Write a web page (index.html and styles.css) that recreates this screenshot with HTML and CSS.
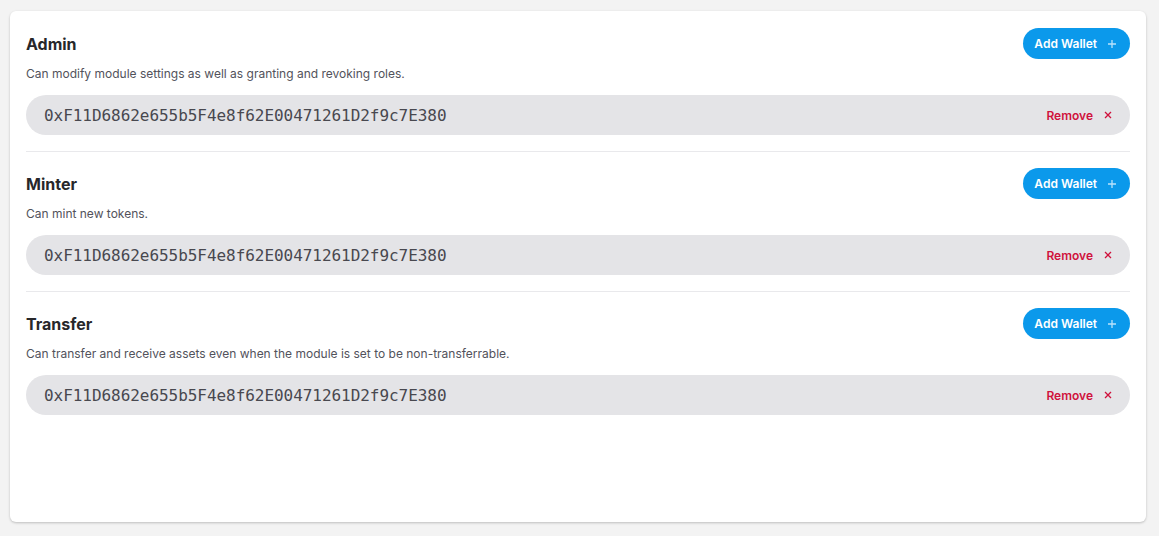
FILE: index.html
```html
<!DOCTYPE html>
<html>
<head>
<meta charset="utf-8">
<link rel="stylesheet" href="styles.css">
</head>
<body>
<div class="card">
  <section class="role">
    <div class="role-head">
      <h2 class="role-title">Admin</h2>
      <button class="add-btn">Add Wallet <span class="plus"><svg width="10" height="10" viewBox="0 0 10 10"><path d="M5 1v8M1 5h8" stroke="currentColor" stroke-width="1.3" fill="none"/></svg></span></button>
    </div>
    <p class="role-desc">Can modify module settings as well as granting and revoking roles.</p>
    <div class="wallet">
      <span class="addr">0xF11D6862e655b5F4e8f62E00471261D2f9c7E380</span>
      <button class="remove">Remove <span class="x"><svg width="8" height="8" viewBox="0 0 8 8"><path d="M1 1l6 6M7 1l-6 6" stroke="currentColor" stroke-width="1.3" fill="none"/></svg></span></button>
    </div>
  </section>
  <section class="role">
    <div class="role-head">
      <h2 class="role-title">Minter</h2>
      <button class="add-btn">Add Wallet <span class="plus"><svg width="10" height="10" viewBox="0 0 10 10"><path d="M5 1v8M1 5h8" stroke="currentColor" stroke-width="1.3" fill="none"/></svg></span></button>
    </div>
    <p class="role-desc">Can mint new tokens.</p>
    <div class="wallet">
      <span class="addr">0xF11D6862e655b5F4e8f62E00471261D2f9c7E380</span>
      <button class="remove">Remove <span class="x"><svg width="8" height="8" viewBox="0 0 8 8"><path d="M1 1l6 6M7 1l-6 6" stroke="currentColor" stroke-width="1.3" fill="none"/></svg></span></button>
    </div>
  </section>
  <section class="role last">
    <div class="role-head">
      <h2 class="role-title">Transfer</h2>
      <button class="add-btn">Add Wallet <span class="plus"><svg width="10" height="10" viewBox="0 0 10 10"><path d="M5 1v8M1 5h8" stroke="currentColor" stroke-width="1.3" fill="none"/></svg></span></button>
    </div>
    <p class="role-desc">Can transfer and receive assets even when the module is set to be non-transferrable.</p>
    <div class="wallet">
      <span class="addr">0xF11D6862e655b5F4e8f62E00471261D2f9c7E380</span>
      <button class="remove">Remove <span class="x"><svg width="8" height="8" viewBox="0 0 8 8"><path d="M1 1l6 6M7 1l-6 6" stroke="currentColor" stroke-width="1.3" fill="none"/></svg></span></button>
    </div>
  </section>
</div>
</body>
</html>
```

FILE: styles.css
```css
html, body {
  margin: 0;
  padding: 0;
  background: #f3f3f3;
  font-family: Inter, "Noto Sans", sans-serif;
}
body {
  padding: 11px 13px 14px 10px;
}
.card {
  background: #fff;
  border-radius: 6px;
  box-shadow: 0 1px 3px rgba(0,0,0,0.15), 0 1px 2px rgba(0,0,0,0.08);
  padding: 17px 16px 16px 16px;
  height: 511px;
  box-sizing: border-box;
}
.role {
  padding: 16px 0;
  border-bottom: 1px solid #e9e9ec;
}
.role:first-child {
  padding-top: 0;
}
.role.last {
  border-bottom: none;
}
.role-head {
  display: flex;
  align-items: center;
  justify-content: space-between;
  height: 31px;
}
.role-title {
  margin: 0;
  font-size: 16px;
  font-weight: 700;
  color: #27272a;
}
.add-btn {
  display: flex;
  align-items: center;
  gap: 10px;
  height: 31px;
  padding: 0 13px 0 11px;
  border: none;
  border-radius: 999px;
  background: #0b99eb;
  color: #fff;
  font-family: inherit;
  font-size: 12px;
  font-weight: 600;
}
.plus {
  display: flex;
  color: #b9e2fb;
}
.role-desc {
  margin: 7px 0 0;
  font-size: 12px;
  line-height: 16px;
  color: #52525b;
}
.wallet {
  margin-top: 13px;
  height: 40px;
  display: flex;
  align-items: center;
  justify-content: space-between;
  background: #e4e4e7;
  border-radius: 999px;
  padding: 0 18px;
}
.addr {
  font-family: "DejaVu Sans Mono", monospace;
  font-size: 16px;
  color: #48484f;
  letter-spacing: -0.05px;
}
.remove {
  display: flex;
  align-items: center;
  gap: 11px;
  border: none;
  background: none;
  padding: 0;
  color: #d0113c;
  font-family: inherit;
  font-size: 12px;
  font-weight: 600;
}
.x {
  display: flex;
}
```
